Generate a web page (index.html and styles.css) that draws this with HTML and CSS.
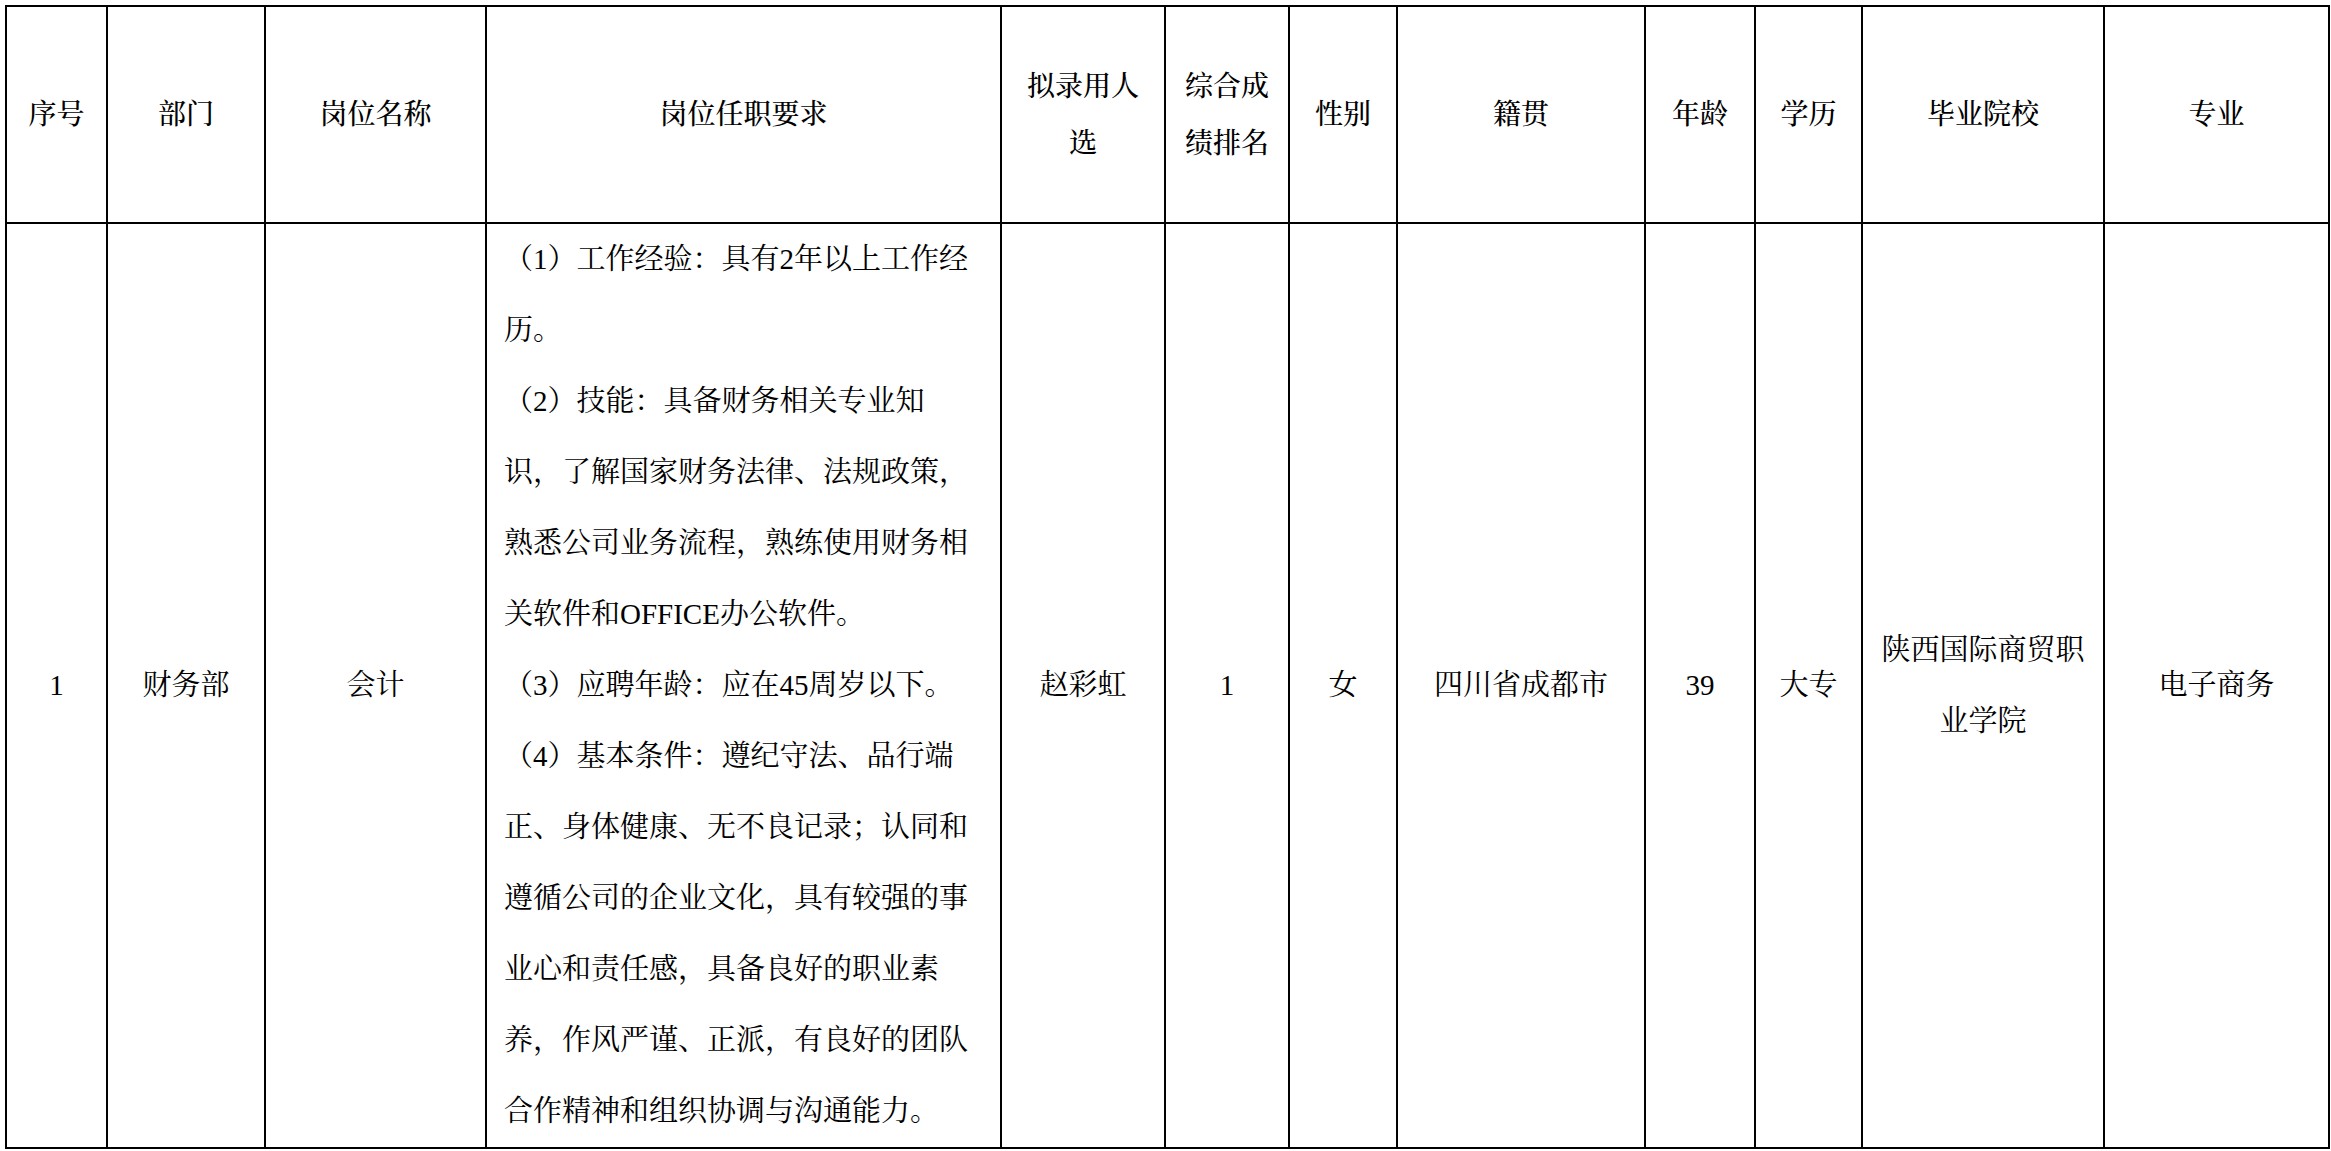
FILE: index.html
```html
<!DOCTYPE html>
<html lang="zh-CN">
<head>
<meta charset="utf-8">
<title>拟录用人员公示</title>
<link rel="stylesheet" href="styles.css">
</head>
<body>
<table class="roster">
  <colgroup>
    <col class="c-no">
    <col class="c-dept">
    <col class="c-post">
    <col class="c-req">
    <col class="c-name">
    <col class="c-rank">
    <col class="c-sex">
    <col class="c-origin">
    <col class="c-age">
    <col class="c-edu">
    <col class="c-school">
    <col class="c-major">
  </colgroup>
  <thead>
    <tr class="head-row">
      <th>序号</th>
      <th>部门</th>
      <th>岗位名称</th>
      <th>岗位任职要求</th>
      <th>拟录用人<br>选</th>
      <th>综合成<br>绩排名</th>
      <th>性别</th>
      <th>籍贯</th>
      <th>年龄</th>
      <th>学历</th>
      <th>毕业院校</th>
      <th>专业</th>
    </tr>
  </thead>
  <tbody>
    <tr class="body-row">
      <td>1</td>
      <td>财务部</td>
      <td>会计</td>
      <td class="req">（1）工作经验：具有2年以上工作经<br>历。<br>（2）技能：具备财务相关专业知<br>识，了解国家财务法律、法规政策，<br>熟悉公司业务流程，熟练使用财务相<br>关软件和OFFICE办公软件。<br>（3）应聘年龄：应在45周岁以下。<br>（4）基本条件：遵纪守法、品行端<br>正、身体健康、无不良记录；认同和<br>遵循公司的企业文化，具有较强的事<br>业心和责任感，具备良好的职业素<br>养，作风严谨、正派，有良好的团队<br>合作精神和组织协调与沟通能力。</td>
      <td>赵彩虹</td>
      <td>1</td>
      <td>女</td>
      <td>四川省成都市</td>
      <td>39</td>
      <td>大专</td>
      <td>陕西国际商贸职<br>业学院</td>
      <td>电子商务</td>
    </tr>
  </tbody>
</table>
</body>
</html>
```

FILE: styles.css
```css
html, body {
  margin: 0;
  padding: 0;
  background: #ffffff;
}

body {
  padding: 5px 0 0 5px;
  font-family: "Liberation Serif", "Noto Serif CJK SC", "Noto Sans CJK SC", serif;
  color: #000000;
}

.roster {
  border-collapse: collapse;
  table-layout: fixed;
  width: 2325px;
}

.c-no { width: 101px; }
.c-dept { width: 158px; }
.c-post { width: 221px; }
.c-req { width: 515px; }
.c-name { width: 164px; }
.c-rank { width: 124px; }
.c-sex { width: 108px; }
.c-origin { width: 248px; }
.c-age { width: 110px; }
.c-edu { width: 107px; }
.c-school { width: 242px; }
.c-major { width: 225px; }

.roster th,
.roster td {
  border: 2px solid #000000;
  padding: 0 16px;
  text-align: center;
  vertical-align: middle;
  font-size: 28px;
  white-space: nowrap;
}

.head-row {
  height: 217px;
}

.roster th {
  font-weight: 500;
  line-height: 57px;
}

.roster td {
  font-weight: 400;
  line-height: 71px;
  font-size: 29px;
}

.roster td.req {
  text-align: left;
  padding: 0 0 0 17px;
}
```
